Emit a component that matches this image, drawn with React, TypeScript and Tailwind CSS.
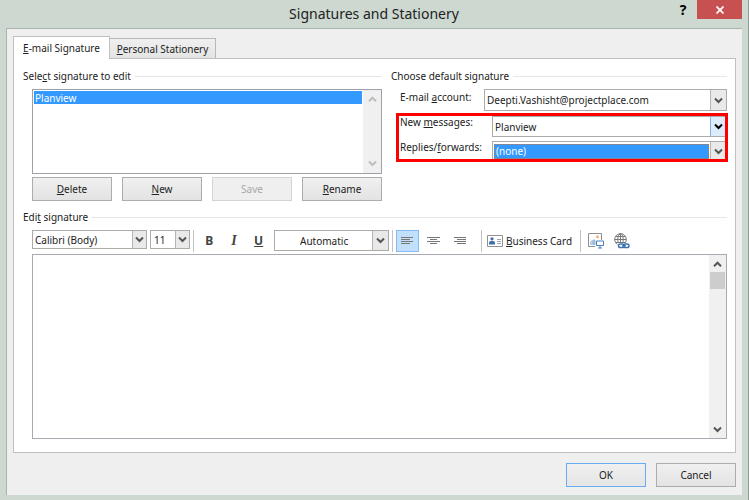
import React, { useState } from 'react';

const btn =
  'h-6 border border-[#acacac] bg-linear-to-b from-[#f0f0f0] to-[#e3e3e3] text-center disabled:border-[#d4d4d4] disabled:from-[#efefef] disabled:to-[#efefef] disabled:text-[#a8a8a8]';

function Chevron({ up = false, className = 'text-[#555]' }: { up?: boolean; className?: string }) {
  return (
    <svg viewBox="0 0 9 7" className={`h-[7px] w-[9px] shrink-0 ${className}`} fill="none" stroke="currentColor" strokeWidth="2" aria-hidden="true">
      <path d={up ? 'M1 5.2 4.5 1.7 8 5.2' : 'M1 1.5 4.5 5 8 1.5'} />
    </svg>
  );
}

type ComboProps = {
  id?: string;
  label?: string;
  options: string[];
  className?: string;
  fieldClass?: string;
  arrowClass?: string;
  chevronClass?: string;
};

function Combo({ id, label, options, className = '', fieldClass = 'pl-[3px]', arrowClass = 'w-4 border-[#b4b4b4] bg-[#e9e9e9]', chevronClass }: ComboProps) {
  return (
    <div className={`grid grid-cols-[1fr_auto] border border-[#ababab] bg-white ${className}`}>
      <select id={id} aria-label={label} className={`col-span-2 col-start-1 row-start-1 min-w-0 appearance-none rounded-none outline-none ${fieldClass}`}>
        {options.map((o) => (
          <option key={o}>{o}</option>
        ))}
      </select>
      <span className={`pointer-events-none col-start-2 row-start-1 flex items-center justify-center border-l ${arrowClass}`}>
        <Chevron className={chevronClass} />
      </span>
    </div>
  );
}

function Heading({ children }: { children: React.ReactNode }) {
  return (
    <div className="flex h-4 items-center gap-1">
      <h2 className="whitespace-nowrap">{children}</h2>
      <span className="h-px flex-1 bg-[#e6e6e6]" />
    </div>
  );
}

function Divider() {
  return <span className="h-[22px] w-px shrink-0 bg-[#c3c3c3]" />;
}

function AlignIcon({ rows }: { rows: [number, number][] }) {
  return (
    <svg viewBox="0 0 13 9" className="h-[9px] w-[13px]" stroke="#777" strokeWidth="1" aria-hidden="true">
      {rows.map(([a, b], i) => (
        <path key={i} d={`M${a} ${i * 2 + 0.5}H${b}`} />
      ))}
    </svg>
  );
}

function CardIcon() {
  return (
    <svg viewBox="0 0 16 12" className="h-3 w-4 shrink-0" aria-hidden="true">
      <path d="M.5.5h15v11H.5z" fill="#fff" stroke="#919191" />
      <circle cx="5" cy="3.8" r="1.6" fill="#3d6fae" />
      <path d="M2 9.5V8q0-2 2-2h2q2 0 2 2v1.5z" fill="#3d6fae" />
      <path d="M10 4.5h4M10 6.5h4M10 8.5h4" stroke="#a3a3a3" />
    </svg>
  );
}

function PictureIcon() {
  return (
    <svg viewBox="0 0 16 16" className="size-4" fill="none" aria-hidden="true">
      <path d="M7 13.5H.5V.5h13V7" stroke="#8d8d8d" />
      <circle cx="9.5" cy="3.8" r="1.5" fill="#f2b27b" />
      <path d="M2 12V9l2-2 2 1.500V12z" fill="#b7cfe6" />
      <path d="M4.500 12V7.500L6 6l1.500 1.500V12z" fill="#9dbcdb" />
      <path d="M8.500 8h7v4.500h-7z" fill="#fff" stroke="#4a80bb" />
      <path d="M12 12.500v2.500M10 15h4" stroke="#4a80bb" />
    </svg>
  );
}

function LinkIcon() {
  return (
    <svg viewBox="0 0 16 16" className="size-4" fill="none" aria-hidden="true">
      <circle cx="6.500" cy="6.500" r="5.800" stroke="#777" />
      <ellipse cx="6.500" cy="6.500" rx="2.700" ry="5.800" stroke="#777" />
      <path d="M.7 6.500h11.600M1.500 3.500h10M1.500 9.500h10M6.500.7v11.600" stroke="#777" />
      <rect x="3.500" y="10" width="12.500" height="6" fill="#fff" />
      <rect x="4.500" y="11" width="5.500" height="3.600" rx="1.800" stroke="#3f74b3" strokeWidth="1.500" />
      <rect x="9.500" y="11" width="5.500" height="3.600" rx="1.800" stroke="#3f74b3" strokeWidth="1.500" />
      <path d="M8 12.800h4" stroke="#3f74b3" strokeWidth="1.300" />
    </svg>
  );
}

export default function App() {
  const [text, setText] = useState('');
  return (
    <div className="flex min-h-screen flex-col border-r border-b border-[#8f9a93] bg-[#cdd8d0] px-[6px] pb-[5px] font-['Noto_Sans','Open_Sans',sans-serif] text-[10px] leading-4 text-[#222]">
      <header className="grid h-7 grid-cols-[1fr_auto_1fr] items-start">
        <h1 className="col-start-2 text-sm leading-7">Signatures and Stationery</h1>
        <div className="flex justify-end gap-1">
          <button type="button" aria-label="Help" className="h-[19px] w-5 text-sm leading-[19px] font-bold text-black">?</button>
          <button type="button" aria-label="Close" className="flex h-[19px] w-[45px] items-center justify-center bg-[#c75050]">
            <svg viewBox="0 0 8 8" className="size-2" stroke="#fff" strokeWidth="1.700" aria-hidden="true">
              <path d="M.5.5l7 7M7.500.5l-7 7" />
            </svg>
          </button>
        </div>
      </header>

      <main className="flex flex-1 flex-col border-t border-l border-[#a9b4ac] bg-[#efefef] px-[6px] pt-[7px] pb-2">
        <div role="tablist" className="flex items-end">
          <button type="button" role="tab" aria-selected="true" className="z-10 -mb-px h-[23px] w-[97px] border border-b-0 border-[#c0c0c0] bg-white">
            <u>E</u>-mail Signature
          </button>
          <button type="button" role="tab" aria-selected="false" className="h-5 w-[106px] border border-b-0 border-l-0 border-[#b8b8b8] bg-linear-to-b from-[#f0f0f0] to-[#e4e4e4]">
            <u>P</u>ersonal Stationery
          </button>
        </div>

        <div role="tabpanel" className="border border-[#c0c0c0] bg-white pt-[9px] pr-2 pb-[13px] pl-[9px]">
          <div className="grid grid-cols-[359fr_336fr] gap-[9px]">
            <section>
              <Heading>Sele<u>c</u>t signature to edit</Heading>
              <div className="mt-[5px] ml-[9px] flex h-[85px] border border-[#a0a0a8]">
                <ul role="listbox" aria-label="Select signature to edit" className="flex-1 p-px">
                  <li role="option" aria-selected="true" className="h-[13px] bg-[#3399ff] pl-px leading-[14px] text-white">Planview</li>
                </ul>
                <div className="flex w-[18px] flex-col items-center justify-between bg-[#f0f0f0] py-[6px]">
                  <Chevron up className="text-[#bdbdbd]" />
                  <Chevron className="text-[#bdbdbd]" />
                </div>
              </div>
              <div className="mt-[3px] ml-[9px] grid grid-cols-4 gap-[10px]">
                <button type="button" className={btn}><u>D</u>elete</button>
                <button type="button" className={btn}><u>N</u>ew</button>
                <button type="button" disabled className={btn}>Save</button>
                <button type="button" className={btn}><u>R</u>ename</button>
              </div>
            </section>

            <section>
              <Heading>Choose default signature</Heading>
              <div className="mt-[5px] flex items-start justify-between pl-[9px]">
                <label htmlFor="account">E-mail <u>a</u>ccount:</label>
                <Combo id="account" options={['Deepti.Vashisht@projectplace.com']} className="h-[22px] w-[243px]" fieldClass="pl-[2px]" />
              </div>
              <div className="relative mt-[5px] pl-[9px]">
                <div className="flex items-start justify-between">
                  <label htmlFor="new-messages" className="-mt-[2px]">New <u>m</u>essages:</label>
                  <Combo id="new-messages" options={['Planview', '(none)']} className="h-[21px] w-[235px]" fieldClass="pl-[2px]" arrowClass="w-4 border-[#7eb4ea] bg-[#dcecfb]" chevronClass="text-black" />
                </div>
                <div className="mt-1 flex items-start justify-between">
                  <label htmlFor="replies" className="-mt-[2px]">Replies/<u>f</u>orwards:</label>
                  <Combo id="replies" options={['(none)', 'Planview']} className="h-[21px] w-[235px]" fieldClass="my-[2px] mr-[17px] ml-px h-[15px] border border-dotted border-[#c9783a] bg-[#3399ff] pl-px leading-[13px] text-white" />
                </div>
                <div className="pointer-events-none absolute -top-[3px] -right-px bottom-0 left-[5px] border-3 border-[#ff0000]" />
              </div>
            </section>
          </div>

          <section className="mt-2">
            <Heading>Edi<u>t</u> signature</Heading>
            <div className="mt-[5px] ml-[9px]">
              <div role="toolbar" aria-label="Formatting" className="flex h-[22px] items-start gap-[3px]">
                <Combo label="Font" options={['Calibri (Body)']} className="h-[19px] w-[115px]" fieldClass="pl-[2px]" arrowClass="w-[14px] border-[#b4b4b4] bg-[#e9e9e9]" />
                <Combo label="Font size" options={['11']} className="h-[19px] w-10" fieldClass="pl-[3px]" arrowClass="w-[14px] border-[#b4b4b4] bg-[#e9e9e9]" />
                <Divider />
                <div className="flex h-[22px] w-[74px] items-center justify-around text-xs font-bold text-[#444]">
                  <button type="button" aria-label="Bold" className="w-6">B</button>
                  <button type="button" aria-label="Italic" className="w-6 font-['Liberation_Serif',serif] text-sm italic">I</button>
                  <button type="button" aria-label="Underline" className="w-6 underline">U</button>
                </div>
                <Combo label="Font color" options={['Automatic']} className="h-[21px] w-[115px]" fieldClass="pl-[25px]" />
                <Divider />
                <div className="flex w-[82px] gap-[3px]">
                  <button type="button" aria-label="Align left" aria-pressed="true" className="flex h-[22px] w-[23px] items-center justify-center border border-[#84bbf0] bg-[#c2dffb]">
                    <AlignIcon rows={[[0, 12], [0, 9], [0, 12], [0, 9]]} />
                  </button>
                  <button type="button" aria-label="Align center" className="flex h-[22px] w-[23px] items-center justify-center">
                    <AlignIcon rows={[[0, 13], [3, 10], [0, 13], [3, 10]]} />
                  </button>
                  <button type="button" aria-label="Align right" className="flex h-[22px] w-[23px] items-center justify-center">
                    <AlignIcon rows={[[1, 13], [4, 13], [1, 13], [4, 13]]} />
                  </button>
                </div>
                <Divider />
                <button type="button" className="flex h-[22px] w-[92px] items-center gap-[3px] pl-[2px] whitespace-nowrap">
                  <CardIcon />
                  <span><u>B</u>usiness Card</span>
                </button>
                <Divider />
                <div className="flex h-[22px] items-center gap-[10px] pl-1">
                  <button type="button" aria-label="Insert picture"><PictureIcon /></button>
                  <button type="button" aria-label="Insert hyperlink"><LinkIcon /></button>
                </div>
              </div>
              <div className="mt-[2px] flex h-[185px] border border-[#a9a9b1]">
                <textarea aria-label="Edit signature" value={text} onChange={(e) => setText(e.target.value)} className="min-w-0 flex-1 resize-none p-1 outline-none" />
                <div className="flex w-[17px] flex-col items-center bg-[#f0f0f0] pt-[6px] pb-[5px]">
                  <Chevron up />
                  <span className="mt-1 h-[17px] w-[15px] bg-[#cdcdcd]" />
                  <Chevron className="mt-auto text-[#555]" />
                </div>
              </div>
            </div>
          </section>
        </div>

        <footer className="mt-[10px] flex justify-end gap-[10px]">
          <button type="button" className="h-6 w-20 border border-[#66adf5] bg-linear-to-b from-[#f0f0f0] to-[#e5e5e5]">OK</button>
          <button type="button" className={`w-20 ${btn}`}>Cancel</button>
        </footer>
      </main>
    </div>
  );
}
